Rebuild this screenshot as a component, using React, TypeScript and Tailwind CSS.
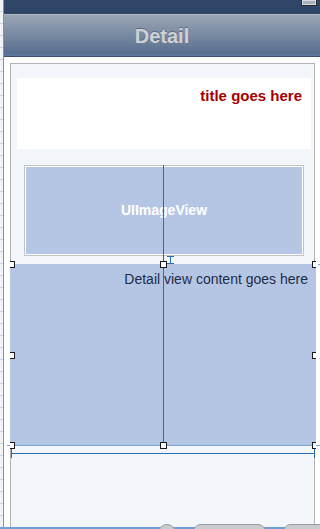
const font = { fontFamily: '"Liberation Sans", Arial, sans-serif' };

function Handle({ className }: { className: string }) {
  return <div className={`absolute w-[7px] h-[7px] bg-white border border-[#1a1a1a] ${className}`} />;
}

export default function App() {
  return (
    <div className="relative w-[320px] h-[529px] overflow-hidden flex bg-white" style={font}>
      {/* ruler gutter */}
      <div className="w-[3px] h-full shrink-0 bg-[repeating-linear-gradient(to_bottom,#f1f3f6_0px,#f1f3f6_11px,#c9d5e6_11px,#c9d5e6_12px)]" />
      <div className="w-px h-full shrink-0 bg-[#8d9096]" />

      <div className="flex-1 flex flex-col min-h-0">
        {/* status strip */}
        <div className="h-[14px] shrink-0 bg-[#2f4668] flex justify-end pr-[3px]">
          <div className="w-[16px] h-[7px] -mt-px bg-[#a7afba] border border-[#2a2a2a] shadow-[inset_0_0_0_1px_#d7dce2]" />
        </div>
        {/* nav bar */}
        <div className="h-[43px] shrink-0 border-t border-[#aeb8c5] bg-gradient-to-b from-[#9aa6b5] to-[#546a8b] flex items-center justify-center relative">
          <span className="text-[20px] font-bold text-[#cfd1d4] [text-shadow:0_-1px_0_#5d6b80]">Detail</span>
          <div className="absolute left-0 right-0 bottom-0 h-[3px] bg-[#5c76a0] border-b border-[#3b4f6e]" />
        </div>

        {/* canvas */}
        <div className="flex-1 min-h-0 overflow-hidden pl-[6px] pt-[6px]">
          <div className="w-[305px] h-[480px] border border-[#b2b2b2] bg-[#f3f6fb] flex flex-col">
            <div className="mt-[14px] ml-[6px] w-[294px] h-[71px] shrink-0 bg-white flex justify-end pr-[9px] pt-[9px]">
              <span className="text-[15px] leading-[18px] font-bold text-[#a40000]">title goes here</span>
            </div>
            <div className="mt-[16px] ml-[13px] w-[280px] h-[91px] shrink-0 border border-[#c2c2c2] p-px bg-white">
              <div className="w-full h-full bg-[#b4c6e4] flex items-center justify-center">
                <span className="text-[14px] font-bold text-white">UIImageView</span>
              </div>
            </div>
            <div className="mt-[8px] -ml-px w-[306px] h-[181px] shrink-0 bg-[#b4c6e4] flex justify-end pr-[8px] pt-[6px]">
              <span className="text-[14px] leading-[18px] text-[#1f2b48]">Detail view content goes here</span>
            </div>
          </div>
        </div>
      </div>

      {/* overlays: guides and selection handles */}
      <div className="absolute left-[163px] top-[165px] w-px h-[280px] bg-[#2b6db1]" />
      <div className="absolute left-[7px] top-[445px] w-[313px] h-px bg-[#79a6d6]" />
      <div className="absolute left-[11px] top-[453px] w-[304px] h-px bg-[#2b6db1]" />
      <div className="absolute left-[11px] top-[449px] w-px h-[9px] bg-[#2b6db1]" />
      <div className="absolute left-[314px] top-[449px] w-px h-[9px] bg-[#2b6db1]" />
      <div className="absolute left-[318px] top-[264px] w-[2px] h-px bg-[#79a6d6]" />

      {/* spacing I-beam */}
      <div className="absolute left-[167px] top-[256px] w-[7px] h-[8px] flex flex-col items-center">
        <div className="w-[7px] h-px bg-[#2b6db1]" />
        <div className="w-px flex-1 bg-[#2b6db1]" />
        <div className="w-[7px] h-px bg-[#2b6db1]" />
      </div>

      <div className="absolute left-[10px] top-[261px] w-[5px] h-[7px] bg-white border border-l-0 border-[#1a1a1a]" />
      <Handle className="left-[160px] top-[261px]" />
      <div className="absolute left-[312px] top-[261px] w-[4px] h-[7px] bg-white border border-r-0 border-[#1a1a1a]" />
      <div className="absolute left-[10px] top-[352px] w-[5px] h-[7px] bg-white border border-l-0 border-[#1a1a1a]" />
      <div className="absolute left-[312px] top-[352px] w-[4px] h-[7px] bg-white border border-r-0 border-[#1a1a1a]" />
      <div className="absolute left-[10px] top-[442px] w-[5px] h-[7px] bg-white border border-l-0 border-[#1a1a1a]" />
      <Handle className="left-[160px] top-[442px]" />
      <div className="absolute left-[312px] top-[442px] w-[4px] h-[7px] bg-white border border-r-0 border-[#1a1a1a]" />

      {/* bottom toolbar peeking in */}
      <div className="absolute left-0 top-[527px] w-[320px] h-[2px] bg-[#6c9fd5]" />
      <div className="absolute left-[158px] top-[524px] w-[18px] h-[18px] rounded-full bg-[#c9cbce] border border-[#9a9da2]" />
      <div className="absolute left-[193px] top-[524px] w-[73px] h-[18px] rounded-[8px] bg-[#c9cbce] border border-[#9a9da2]" />
      <div className="absolute left-[283px] top-[524px] w-[50px] h-[18px] rounded-[8px] bg-[#c9cbce] border border-[#9a9da2]" />
    </div>
  );
}
